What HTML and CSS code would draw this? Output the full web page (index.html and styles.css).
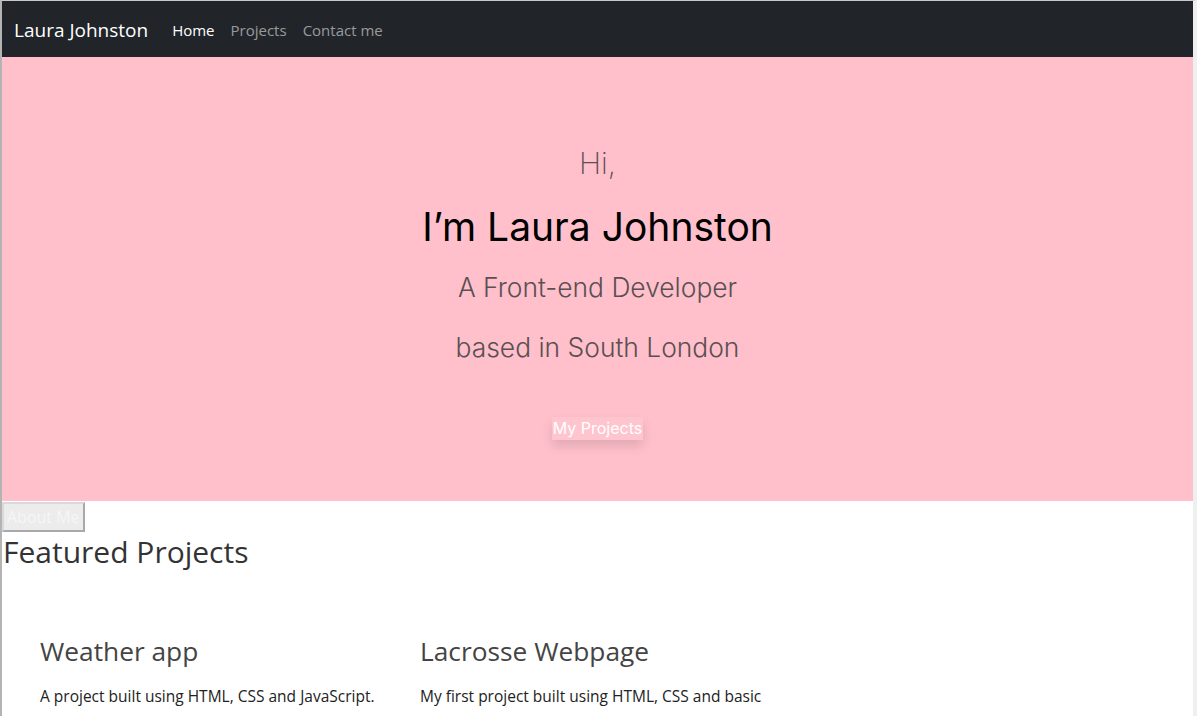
FILE: index.html
```html
<!DOCTYPE html>
<html lang="en">
<head>
<meta charset="utf-8">
<title>Laura Johnston</title>
<link rel="stylesheet" href="styles.css">
</head>
<body>
<div class="page">
  <nav class="navbar">
    <a class="brand" href="#">Laura Johnston</a>
    <ul class="nav-links">
      <li><a class="active" href="#">Home</a></li>
      <li><a href="#">Projects</a></li>
      <li><a href="#">Contact me</a></li>
    </ul>
  </nav>
  <header class="hero">
    <p class="hi">Hi,</p>
    <h1 class="name">I’m Laura Johnston</h1>
    <p class="role">A Front-end Developer</p>
    <p class="role based">based in South London</p>
    <a class="hero-btn" href="#">My Projects</a>
  </header>
  <main class="content">
    <button class="about-btn">About Me</button>
    <h2 class="featured">Featured Projects</h2>
    <div class="projects">
      <div class="project">
        <h3>Weather app</h3>
        <p>A project built using HTML, CSS and JavaScript.</p>
      </div>
      <div class="project">
        <h3>Lacrosse Webpage</h3>
        <p>My first project built using HTML, CSS and basic</p>
      </div>
    </div>
  </main>
</div>
</body>
</html>
```

FILE: styles.css
```css
* { box-sizing: border-box; }
html, body { margin: 0; padding: 0; height: 100%; overflow: hidden; }
body {
  background: #ffffff;
  font-family: "Open Sans", "Noto Sans", sans-serif;
}
.page {
  border-left: 2px solid #b4b4b4;
  border-right: 4px solid #efefef;
  border-top: 1px solid #c9c9c9;
  min-height: 100%;
}
.navbar {
  background: #212529;
  height: 56px;
  display: flex;
  align-items: center;
  padding: 2px 12px 0;
}
.brand {
  color: #ffffff;
  font-size: 19px;
  text-decoration: none;
  margin-right: 16px;
}
.nav-links {
  list-style: none;
  display: flex;
  margin: 0;
  padding: 0;
}
.nav-links a {
  display: block;
  padding: 0 8px;
  font-size: 15px;
  color: rgba(255,255,255,0.55);
  text-decoration: none;
}
.nav-links a.active { color: #ffffff; }
.hero {
  background: #ffc0cb;
  height: 444px;
  display: flex;
  flex-direction: column;
  align-items: center;
  font-family: Inter, sans-serif;
  padding-top: 88px;
}
.hero p, .hero h1 { margin: 0; }
.hi {
  font-size: 30px;
  line-height: 36px;
  font-weight: 200;
  color: #5a4f52;
}
.name {
  font-size: 39px;
  line-height: 47px;
  font-weight: 400;
  color: #000;
  margin-top: 22px !important;
}
.role {
  font-size: 26.4px;
  line-height: 31px;
  font-weight: 300;
  color: #5a4f52;
  margin-top: 22px !important;
}
.role.based { margin-top: 29px !important; }
.hero-btn {
  margin-top: 54px;
  color: #fff;
  font-size: 16px;
  text-decoration: none;
  padding: 1px 1px;
  line-height: 21px;
  background: rgba(255,255,255,0.08);
  box-shadow: 0 6px 12px rgba(0,0,0,0.12);
}
.content { font-family: "Open Sans", "Noto Sans", sans-serif; }
.about-btn {
  display: block;
  font-family: inherit;
  font-size: 16px;
  color: #f6f6f6;
  background: #ececec;
  border: 2px solid #a9a9a9;
  border-top-color: #d9d9d9;
  border-left-color: #d9d9d9;
  padding: 1px 3px;
  height: 30px;
  margin: 1px 0 0;
}
.featured {
  font-size: 30px;
  font-weight: 400;
  color: #333;
  margin: 0 0 0 1px;
  line-height: 1.3;
}
.projects {
  display: flex;
  padding: 65px 38px 0;
}
.project { width: 380px; }
.project h3 {
  font-size: 26.3px;
  font-weight: 400;
  color: #444;
  margin: 0;
  line-height: 1.2;
}
.project p {
  font-size: 15.5px;
  color: #222;
  margin: 17px 0 0;
}
```
